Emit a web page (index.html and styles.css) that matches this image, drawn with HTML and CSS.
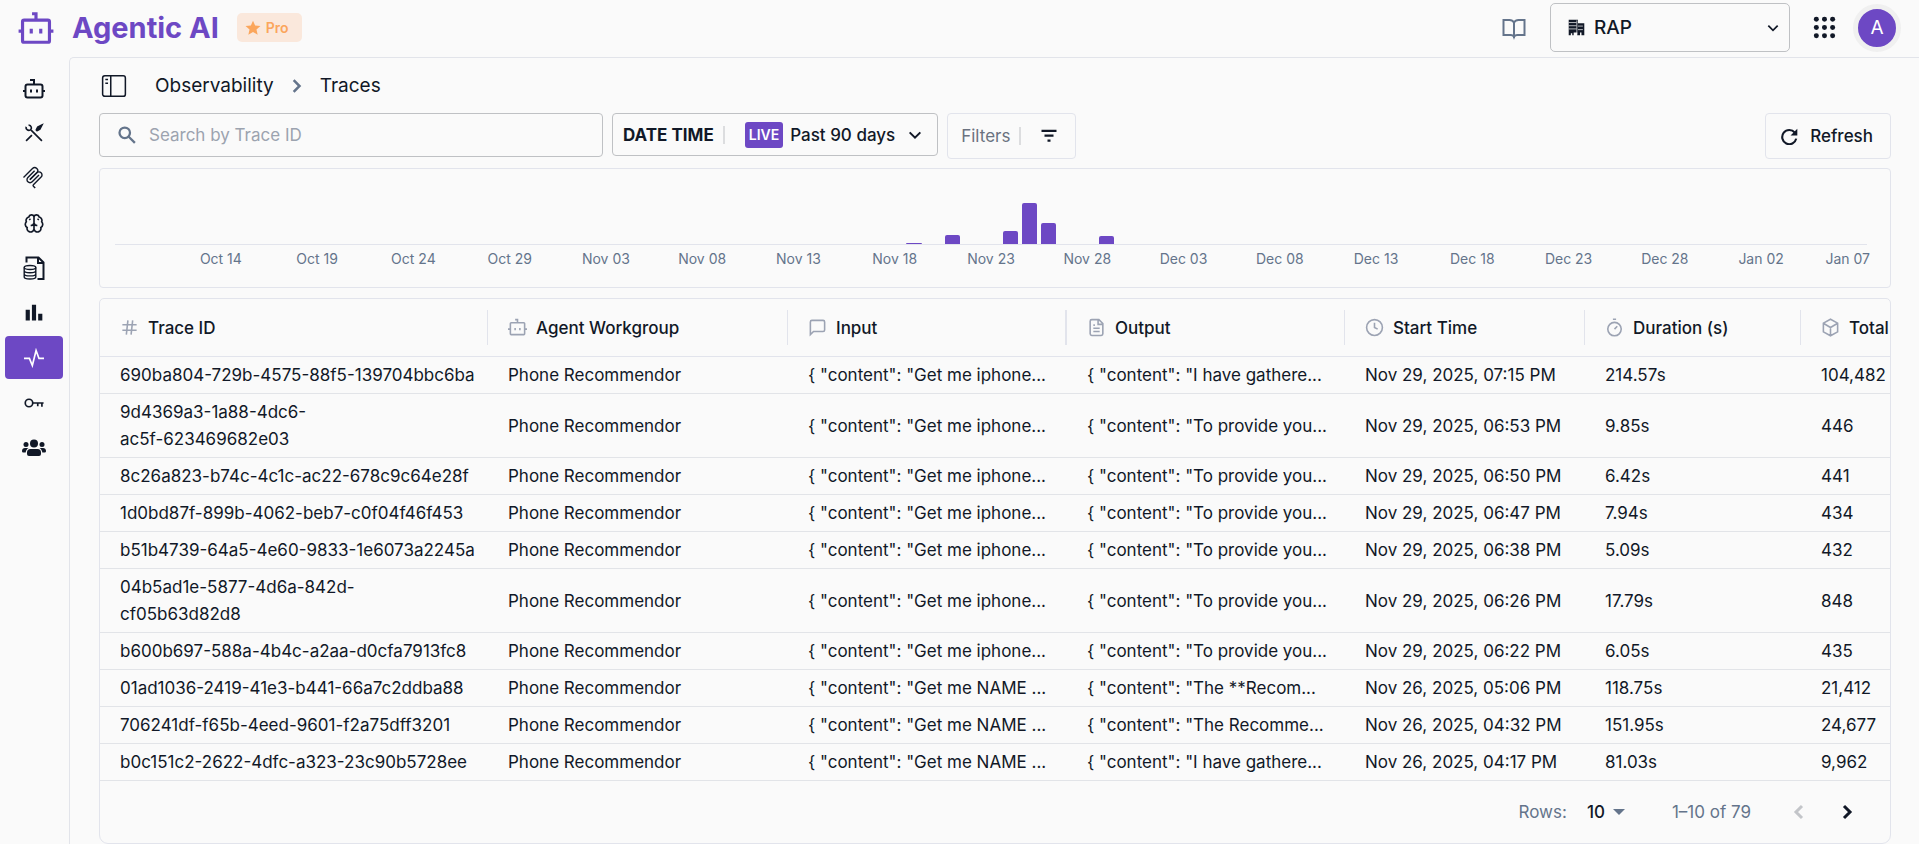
FILE: index.html
```html
<!DOCTYPE html>
<html lang="en">
<head>
    <meta charset="UTF-8">
    <meta name="viewport" content="width=device-width, initial-scale=1.0">
    <title>Agentic AI - Traces</title>
    <link rel="stylesheet" href="styles.css">
</head>
<body>
    <header class="topbar">
        <a class="brand" href="#">
            <svg class="brand-icon" viewBox="0 0 24 24"><path d="M12 7V3H9.500M1 14h3M20 14h3M9 12.500v3M15 12.500v3"/><rect x="3.500" y="7" width="17" height="14" rx="1"/></svg>
            <span class="brand-name">Agentic AI</span>
        </a>
        <span class="plan">
            <svg class="plan-icon" viewBox="0 0 24 24"><path d="M12 1l3.200 7.400 8 .7-6 5.300 1.800 7.800-7-4.200-7 4.200 1.800-7.800-6-5.300 8-.7z"/></svg>
            Pro
        </span>
        <div class="topbar-actions">
            <a class="docs-link" href="#" aria-label="Documentation">
                <svg class="line-icon" viewBox="0 0 24 24"><path d="M12 6.500C11 4.800 9.500 4 7.500 4H1.500v15h7c2 0 3 .6 3.500 2 .5-1.400 1.500-2 3.500-2h7V4h-6c-2 0-3.500.8-4.500 2.500zM12 6.500V22"/></svg>
            </a>
            <div class="workspace">
                <svg class="workspace-icon" viewBox="0 0 24 24"><path d="M1 1h13v5h9v17h-4v-4h-2v4h-4v-4H8v4H6v-3H4v3H1z"/><path class="cut" d="M1 5h11M1 9.500h11M1 14h11M14 10h7M14 15h7M12.500 2v20"/></svg>
                <select class="workspace-select" aria-label="Workspace">
                    <option>RAP</option>
                </select>
                <svg class="select-arrow" viewBox="0 0 24 24"><path d="M4 8l8 8 8-8"/></svg>
            </div>
            <button class="apps-button" type="button" aria-label="Apps">
                <svg class="apps-icon" viewBox="0 0 24 24"><circle cx="3.500" cy="3.500" r="2.600"/><circle cx="12" cy="3.500" r="2.600"/><circle cx="20.500" cy="3.500" r="2.600"/><circle cx="3.500" cy="12" r="2.600"/><circle cx="12" cy="12" r="2.600"/><circle cx="20.500" cy="12" r="2.600"/><circle cx="3.500" cy="20.500" r="2.600"/><circle cx="12" cy="20.500" r="2.600"/><circle cx="20.500" cy="20.500" r="2.600"/></svg>
            </button>
            <button class="avatar" type="button">A</button>
        </div>
    </header>

    <div class="layout">
        <nav class="sidebar" aria-label="Main">
            <a class="nav-item" href="#" aria-label="Agents">
                <svg class="nav-icon large" viewBox="0 0 24 24"><path d="M12 8V4H8M1 15h3M20 15h3M9 13.500v3M15 13.500v3"/><rect x="3.500" y="8.500" width="17" height="13" rx="2"/></svg>
            </a>
            <a class="nav-item" href="#" aria-label="Tools">
                <svg class="nav-icon" viewBox="0 0 24 24"><path d="M8.500 8.500L21.500 21.500M2.500 21.500l7-7M14.500 9.500l3-3"/><path d="M2.500 4.500c-.5 3 2 5 5 4C10 7 9 2.500 5.500 2.500"/><path class="solid" d="M21.500 2.500l-5 2.500-1.500 3 1 1 3-1.500z"/></svg>
            </a>
            <a class="nav-item" href="#" aria-label="MCP servers">
                <svg class="nav-icon large thin" viewBox="0 0 24 24"><path d="M1.500 11.500l9-9a3 3 0 0 1 4.300 4.300l-7 7"/><path d="M8 13.600l6.800-6.800a3 3 0 0 1 4.300 0 3 3 0 0 1 0 4.300l-7.700 7.700a1 1 0 0 0 0 1.400l1.800 1.900"/><path d="M12.600 4.700l-6.700 6.800a3 3 0 0 0 4.300 4.300l6.800-6.800"/></svg>
            </a>
            <a class="nav-item" href="#" aria-label="Models">
                <svg class="nav-icon" viewBox="0 0 24 24"><path d="M12 4.500a3.200 3.200 0 0 0-6.200.3 4.200 4.200 0 0 0-3 5.700 4.500 4.500 0 0 0 1 7A4.200 4.200 0 0 0 12 19.500zM12 4.500a3.200 3.200 0 0 1 6.200.3 4.200 4.200 0 0 1 3 5.700 4.500 4.500 0 0 1-1 7 4.200 4.200 0 0 1-8.200 2M8 15c2 0 3.500-.8 4-3 .5 2.200 2 3 4 3M6.500 7l1 1.500M17.500 7l-1 1.500"/></svg>
            </a>
            <a class="nav-item" href="#" aria-label="Knowledge">
                <svg class="nav-icon large" viewBox="0 0 24 24"><path d="M4.500 6.500V1.500h12l5 5v16.500h-6M16 1.500v5.500h5.500"/><g class="disk"><ellipse cx="8" cy="11.500" rx="5.800" ry="2"/><path d="M2.200 11.500v9.500c0 1.100 2.600 2 5.800 2s5.800-.9 5.800-2v-9.500M2.200 14.700c0 1.100 2.600 2 5.800 2s5.800-.9 5.800-2M2.200 17.900c0 1.100 2.600 2 5.800 2s5.800-.9 5.800-2"/></g></svg>
            </a>
            <a class="nav-item" href="#" aria-label="Analytics">
                <svg class="nav-icon fill" viewBox="0 0 24 24"><path d="M2 8h5v13H2zM9.500 2h5v19h-5zM17 13h5v8h-5z"/></svg>
            </a>
            <a class="nav-item active" href="#" aria-label="Observability">
                <svg class="nav-icon" viewBox="0 0 24 24"><path d="M0 12.500h6.500l3.500 8.500 4.500-18L18 12.500h6"/></svg>
            </a>
            <a class="nav-item" href="#" aria-label="Keys">
                <svg class="nav-icon" viewBox="0 0 24 24"><circle cx="6" cy="12" r="4.500"/><path d="M10.500 12H23.500M16.500 12v4M21.500 12v4.500"/></svg>
            </a>
            <a class="nav-item" href="#" aria-label="Users">
                <svg class="nav-icon large fill" viewBox="0 0 24 24"><circle cx="12" cy="7.500" r="4"/><circle cx="4" cy="8.500" r="2.500"/><circle cx="20" cy="8.500" r="2.500"/><path d="M8.500 13h7a3.500 3.500 0 0 1 3.500 3.500V18a2 2 0 0 1-2 2H7a2 2 0 0 1-2-2v-1.500A3.500 3.500 0 0 1 8.500 13zM3 12h3.500c-1.700 1-2.500 2.500-2.800 4.500H1.500C.7 16.500 0 16 0 15c0-1.800 1.200-3 3-3zM21 12h-3.500c1.700 1 2.500 2.500 2.800 4.500h2.200c.8 0 1.500-.5 1.500-1.500 0-1.800-1.200-3-3-3z"/></svg>
            </a>
        </nav>

        <main class="content">
            <div class="breadcrumb">
                <button class="panel-toggle" type="button" aria-label="Toggle sidebar">
                    <svg class="panel-icon" viewBox="0 0 24 24"><rect x="1.500" y="2.500" width="21" height="19" rx="2"/><path d="M9 2.500v19M4 6h2.500M4 9.500h2.500"/></svg>
                </button>
                <a class="crumb" href="#">Observability</a>
                <svg class="crumb-arrow" viewBox="0 0 24 24"><path d="M8 5l7 7-7 7"/></svg>
                <span class="crumb">Traces</span>
            </div>

            <div class="toolbar">
                <label class="search">
                    <svg class="search-icon" viewBox="0 0 24 24"><circle cx="9" cy="9" r="7"/><path d="M14 14l8.500 8.500"/></svg>
                    <input class="search-input" type="text" placeholder="Search by Trace ID" aria-label="Search by Trace ID">
                </label>
                <button class="date-button" type="button">
                    <span class="date-title">DATE TIME</span>
                    <span class="divider"></span>
                    <span class="live">LIVE</span>
                    <span class="date-range">Past 90 days</span>
                    <svg class="date-arrow" viewBox="0 0 24 24"><path d="M4 8l8 8 8-8"/></svg>
                </button>
                <button class="filter-button" type="button">
                    <span>Filters</span>
                    <span class="divider"></span>
                    <svg class="filter-icon" viewBox="0 0 24 24"><path d="M2 5h20M6 11.500h12M10 18h4"/></svg>
                </button>
                <button class="refresh-button" type="button">
                    <svg class="refresh-icon" viewBox="0 0 24 24"><path class="arc" d="M19.500 6.500A10 10 0 1 0 21.500 15"/><path d="M23 1v9.500h-9.500z"/></svg>
                    Refresh
                </button>
            </div>

            <section class="chart" aria-label="Traces per day">
                <div class="bars">
                    <div class="bar" style="grid-column: 42; height: 1px"></div>
                    <div class="bar" style="grid-column: 44; height: 9px"></div>
                    <div class="bar" style="grid-column: 47; height: 13px"></div>
                    <div class="bar" style="grid-column: 48; height: 41px"></div>
                    <div class="bar" style="grid-column: 49; height: 21px"></div>
                    <div class="bar" style="grid-column: 52; height: 8px"></div>
                </div>
                <div class="days">
                    <span>Oct 14</span>
                    <span>Oct 19</span>
                    <span>Oct 24</span>
                    <span>Oct 29</span>
                    <span>Nov 03</span>
                    <span>Nov 08</span>
                    <span>Nov 13</span>
                    <span>Nov 18</span>
                    <span>Nov 23</span>
                    <span>Nov 28</span>
                    <span>Dec 03</span>
                    <span>Dec 08</span>
                    <span>Dec 13</span>
                    <span>Dec 18</span>
                    <span>Dec 23</span>
                    <span>Dec 28</span>
                    <span>Jan 02</span>
                    <span>Jan 07</span>
                </div>
            </section>

            <section class="table-card">
                <table class="traces">
                    <colgroup>
                        <col class="col-id">
                        <col class="col-agent">
                        <col class="col-input">
                        <col class="col-output">
                        <col class="col-start">
                        <col class="col-duration">
                        <col class="col-tokens">
                    </colgroup>
                    <thead>
                        <tr>
                            <th><div class="head"><svg class="head-icon" viewBox="0 0 24 24"><path d="M3 8.500h18M3 15.500h18M10 3L8 21M16 3l-2 18"/></svg>Trace ID</div></th>
                            <th><div class="head"><svg class="head-icon" viewBox="0 0 24 24"><path d="M12 6V2H9M0 14h3M21 14h3M9 12.500v3M15 12.500v3"/><rect x="3" y="6" width="18" height="15" rx="1"/></svg>Agent Workgroup</div></th>
                            <th><div class="head wide"><svg class="head-icon" viewBox="0 0 24 24"><path d="M21 15a2 2 0 0 1-2 2H7l-4 4V5a2 2 0 0 1 2-2h14a2 2 0 0 1 2 2z"/></svg>Input</div></th>
                            <th><div class="head"><svg class="head-icon" viewBox="0 0 24 24"><path d="M15 2H6a2 2 0 0 0-2 2v16a2 2 0 0 0 2 2h12a2 2 0 0 0 2-2V7zM14 2v6h6M8 9h2M8 13h8M8 17h8"/></svg>Output</div></th>
                            <th><div class="head"><svg class="head-icon" viewBox="0 0 24 24"><circle cx="12" cy="12" r="10"/><path d="M12 6v6l4 2"/></svg>Start Time</div></th>
                            <th><div class="head"><svg class="head-icon" viewBox="0 0 24 24"><circle cx="12" cy="14" r="8.500"/><path d="M10 1.500h4M12 14l3.500-3.500"/></svg>Duration (s)</div></th>
                            <th><div class="head last"><svg class="head-icon" viewBox="0 0 24 24"><path d="M12 1.500l9 5v11l-9 5-9-5v-11zM3.500 7l8.500 5 8.500-5M12 12v10"/></svg>Total</div></th>
                        </tr>
                    </thead>
                    <tbody>
                        <tr>
                            <td>690ba804-729b-4575-88f5-139704bbc6ba</td>
                            <td>Phone Recommendor</td>
                            <td>{ "content": "Get me iphone...</td>
                            <td>{ "content": "I have gathere...</td>
                            <td>Nov 29, 2025, 07:15 PM</td>
                            <td>214.57s</td>
                            <td>104,482</td>
                        </tr>
                        <tr>
                            <td>9d4369a3-1a88-4dc6-<br>ac5f-623469682e03</td>
                            <td>Phone Recommendor</td>
                            <td>{ "content": "Get me iphone...</td>
                            <td>{ "content": "To provide you...</td>
                            <td>Nov 29, 2025, 06:53 PM</td>
                            <td>9.85s</td>
                            <td>446</td>
                        </tr>
                        <tr>
                            <td>8c26a823-b74c-4c1c-ac22-678c9c64e28f</td>
                            <td>Phone Recommendor</td>
                            <td>{ "content": "Get me iphone...</td>
                            <td>{ "content": "To provide you...</td>
                            <td>Nov 29, 2025, 06:50 PM</td>
                            <td>6.42s</td>
                            <td>441</td>
                        </tr>
                        <tr>
                            <td>1d0bd87f-899b-4062-beb7-c0f04f46f453</td>
                            <td>Phone Recommendor</td>
                            <td>{ "content": "Get me iphone...</td>
                            <td>{ "content": "To provide you...</td>
                            <td>Nov 29, 2025, 06:47 PM</td>
                            <td>7.94s</td>
                            <td>434</td>
                        </tr>
                        <tr>
                            <td>b51b4739-64a5-4e60-9833-1e6073a2245a</td>
                            <td>Phone Recommendor</td>
                            <td>{ "content": "Get me iphone...</td>
                            <td>{ "content": "To provide you...</td>
                            <td>Nov 29, 2025, 06:38 PM</td>
                            <td>5.09s</td>
                            <td>432</td>
                        </tr>
                        <tr>
                            <td>04b5ad1e-5877-4d6a-842d-<br>cf05b63d82d8</td>
                            <td>Phone Recommendor</td>
                            <td>{ "content": "Get me iphone...</td>
                            <td>{ "content": "To provide you...</td>
                            <td>Nov 29, 2025, 06:26 PM</td>
                            <td>17.79s</td>
                            <td>848</td>
                        </tr>
                        <tr>
                            <td>b600b697-588a-4b4c-a2aa-d0cfa7913fc8</td>
                            <td>Phone Recommendor</td>
                            <td>{ "content": "Get me iphone...</td>
                            <td>{ "content": "To provide you...</td>
                            <td>Nov 29, 2025, 06:22 PM</td>
                            <td>6.05s</td>
                            <td>435</td>
                        </tr>
                        <tr>
                            <td>01ad1036-2419-41e3-b441-66a7c2ddba88</td>
                            <td>Phone Recommendor</td>
                            <td>{ "content": "Get me NAME ...</td>
                            <td>{ "content": "The **Recom...</td>
                            <td>Nov 26, 2025, 05:06 PM</td>
                            <td>118.75s</td>
                            <td>21,412</td>
                        </tr>
                        <tr>
                            <td>706241df-f65b-4eed-9601-f2a75dff3201</td>
                            <td>Phone Recommendor</td>
                            <td>{ "content": "Get me NAME ...</td>
                            <td>{ "content": "The Recomme...</td>
                            <td>Nov 26, 2025, 04:32 PM</td>
                            <td>151.95s</td>
                            <td>24,677</td>
                        </tr>
                        <tr>
                            <td>b0c151c2-2622-4dfc-a323-23c90b5728ee</td>
                            <td>Phone Recommendor</td>
                            <td>{ "content": "Get me NAME ...</td>
                            <td>{ "content": "I have gathere...</td>
                            <td>Nov 26, 2025, 04:17 PM</td>
                            <td>81.03s</td>
                            <td>9,962</td>
                        </tr>
                    </tbody>
                </table>
                <div class="pagination">
                    <label for="rows">Rows:</label>
                    <div class="rows">
                        <select class="rows-select" id="rows">
                            <option>10</option>
                        </select>
                        <svg class="rows-arrow" viewBox="0 0 12 6"><path d="M0 0h12L6 6z"/></svg>
                    </div>
                    <span class="range">1–10 of 79</span>
                    <button class="page-button" type="button" aria-label="Previous page" disabled>
                        <svg class="page-icon" viewBox="0 0 24 24"><path d="M15 6l-6 6 6 6"/></svg>
                    </button>
                    <button class="page-button" type="button" aria-label="Next page">
                        <svg class="page-icon" viewBox="0 0 24 24"><path d="M9 6l6 6-6 6"/></svg>
                    </button>
                </div>
            </section>
        </main>
    </div>
</body>
</html>
```
FILE: styles.css
```css
* {
    box-sizing: border-box;
}
body {
    margin: 0;
    background-color: #fafafa;
    color: #111827;
    font-family: Inter, "Liberation Sans", sans-serif;
    font-size: 17px;
    min-height: 100vh;
    display: flex;
    flex-direction: column;
}
a {
    color: inherit;
    text-decoration: none;
}
button, input, select {
    font: inherit;
    color: inherit;
    background: none;
    border: none;
    padding: 0;
    margin: 0;
    outline: none;
}
button {
    cursor: pointer;
}
select {
    appearance: none;
}
svg {
    display: block;
    flex-shrink: 0;
    fill: none;
    stroke: currentColor;
    stroke-width: 2;
}

/* Top bar */
.topbar {
    display: flex;
    align-items: center;
    height: 57px;
    padding: 0 18px 2px 17px;
}
.brand {
    display: flex;
    align-items: center;
    gap: 17px;
    color: #6d48c4;
}
.brand-icon {
    width: 38px;
    height: 38px;
}
.brand-name {
    font-size: 29px;
    font-weight: 700;
}
.plan {
    display: flex;
    align-items: center;
    gap: 5px;
    height: 29px;
    margin-left: 18px;
    padding: 0 13px 0 8px;
    border-radius: 5px;
    background-color: #fae8dc;
    color: #fba65c;
    font-size: 14px;
    font-weight: 600;
}
.plan-icon {
    width: 16px;
    height: 16px;
    fill: currentColor;
    stroke: none;
}
.topbar-actions {
    display: flex;
    align-items: center;
    margin-left: auto;
}
.docs-link {
    margin-right: 24px;
    color: #64748b;
}
.line-icon {
    width: 24px;
    height: 24px;
}
.workspace {
    display: flex;
    align-items: center;
    width: 240px;
    height: 49px;
    padding: 0 9px 0 17px;
    border: 1px solid #bfc1c4;
    border-radius: 5px;
}
.workspace-icon {
    width: 17px;
    height: 17px;
    margin-right: 9px;
    fill: currentColor;
    stroke: none;
}
.workspace-icon .cut {
    stroke: #fafafa;
    stroke-width: 1;
}
.workspace-select {
    flex: 1;
    height: 100%;
    font-size: 19px;
    font-weight: 500;
}
.select-arrow {
    width: 14px;
    height: 14px;
    stroke-width: 3;
}
.apps-button {
    margin-left: 23px;
}
.apps-icon {
    width: 23px;
    height: 23px;
    fill: currentColor;
    stroke: none;
}
.avatar {
    width: 48px;
    height: 48px;
    margin-left: 17px;
    border: 5px solid #f0f0f0;
    border-radius: 50%;
    background-color: #6d48c4;
    color: #fff;
    font-size: 19px;
}

/* Sidebar */
.layout {
    display: flex;
    flex: 1;
}
.sidebar {
    display: flex;
    flex-direction: column;
    gap: 2px;
    width: 69px;
    padding: 9px 6px 0 5px;
    flex-shrink: 0;
}
.nav-item {
    display: flex;
    align-items: center;
    justify-content: center;
    height: 43px;
    border-radius: 4px;
}
.nav-item.active {
    background-color: #6d48c4;
    color: #fff;
}
.nav-icon {
    width: 20px;
    height: 20px;
}
.nav-icon.large {
    width: 24px;
    height: 24px;
}
.nav-icon.thin {
    stroke-width: 1.4;
}
.nav-icon.fill {
    fill: currentColor;
    stroke: none;
}
.nav-icon .solid {
    fill: currentColor;
}
.nav-icon .disk {
    stroke-width: 1.4;
}

/* Content */
.content {
    flex: 1;
    min-width: 0;
    padding: 0 28px 0 29px;
    border-top: 1px solid #e2e4ea;
    border-left: 1px solid #e2e4ea;
    border-top-left-radius: 5px;
}
.breadcrumb {
    display: flex;
    align-items: center;
    height: 55px;
    padding-left: 2px;
    font-size: 19px;
}
.panel-icon {
    width: 26px;
    height: 26px;
    stroke-width: 1.4;
}
.panel-toggle {
    margin-right: 28px;
}
.crumb-arrow {
    width: 20px;
    height: 20px;
    margin: 0 13px;
    color: #64748b;
    stroke-width: 3;
}

/* Search and filters */
.toolbar {
    display: flex;
    align-items: flex-start;
    gap: 9px;
    height: 55px;
}
.search {
    display: flex;
    align-items: center;
    gap: 13px;
    width: 504px;
    height: 44px;
    padding: 0 18px;
    border: 1px solid #bfc1c4;
    border-radius: 4px;
}
.search-icon {
    width: 18px;
    height: 18px;
    color: #64748b;
    stroke-width: 3;
}
.search-input {
    flex: 1;
    min-width: 0;
    height: 100%;
}
.search-input::placeholder {
    color: #9ca3af;
    opacity: 1;
}
.divider {
    width: 2px;
    height: 18px;
    background-color: #dcdddf;
}
.date-button {
    display: flex;
    align-items: center;
    height: 43px;
    padding: 0 14px 0 10px;
    border: 1px solid #bfc1c4;
    border-radius: 4px;
    font-weight: 500;
}
.date-title {
    margin-right: 9px;
    font-weight: 700;
}
.live {
    height: 26px;
    margin: 0 7px 0 20px;
    padding: 0 4px;
    border-radius: 3px;
    background-color: #6d48c4;
    color: #fff;
    font-size: 14px;
    font-weight: 600;
    line-height: 26px;
}
.date-arrow {
    width: 16px;
    height: 16px;
    margin-left: 12px;
    stroke-width: 3;
}
.filter-button {
    display: flex;
    align-items: center;
    gap: 9px;
    height: 46px;
    padding: 0 17px 0 13px;
    border: 1px solid #e2e4ec;
    border-radius: 4px;
    color: #6b7280;
}
.filter-icon {
    width: 18px;
    height: 18px;
    margin-left: 10px;
    color: #111827;
    stroke-width: 3;
}
.refresh-button {
    display: flex;
    align-items: center;
    gap: 12px;
    height: 46px;
    margin-left: auto;
    padding: 0 17px 0 15px;
    border: 1px solid #e2e4ec;
    border-radius: 4px;
    font-weight: 500;
}
.refresh-icon {
    width: 17px;
    height: 17px;
    fill: currentColor;
    stroke: none;
}
.refresh-icon .arc {
    fill: none;
    stroke: currentColor;
    stroke-width: 3;
}

/* Chart */
.chart {
    height: 120px;
    padding: 0 23px 0 15px;
    border: 1px solid #e2e4ec;
    border-radius: 4px;
}
.bars {
    display: grid;
    grid-template-columns: repeat(91, minmax(0, 1fr));
    align-items: end;
    height: 76px;
    border-bottom: 1px solid #e2e4ec;
}
.bar {
    grid-row: 1;
    margin: 0 2px;
    border-radius: 2px 2px 0 0;
    background-color: #6d48c4;
}
.days {
    display: grid;
    grid-template-columns: repeat(91, minmax(0, 1fr));
    padding-top: 4px;
    color: #64748b;
    font-size: 14px;
    line-height: 20px;
}
.days span {
    grid-column: span 5;
    text-align: center;
    white-space: nowrap;
}
.days span:first-child {
    grid-column: 4 / span 5;
}
.days span:last-child {
    grid-column: 90 / span 2;
    justify-self: center;
}

/* Traces table */
.table-card {
    margin-top: 10px;
    border: 1px solid #e2e4ec;
    border-radius: 5px 5px 9px 9px;
}
.traces {
    width: 100%;
    table-layout: fixed;
    border-collapse: separate;
    border-spacing: 0;
}
.col-id {
    width: 388px;
}
.col-agent {
    width: 300px;
}
.col-input {
    width: 279px;
}
.col-output {
    width: 278px;
}
.col-start {
    width: 240px;
}
.col-duration {
    width: 216px;
}
.traces th {
    height: 58px;
    padding: 0;
    border-bottom: 1px solid #e2e4ec;
    font-weight: 500;
    text-align: left;
}
.head {
    display: flex;
    align-items: center;
    gap: 9px;
    height: 35px;
    padding-left: 20px;
    border-right: 1px solid #e2e4ec;
    white-space: nowrap;
}
.head.wide {
    border-right-width: 2px;
}
.head.last {
    border-right: none;
}
.head-icon {
    width: 19px;
    height: 19px;
    color: #9ca3b3;
}
.traces td {
    padding: 5px 0 4px 20px;
    border-bottom: 1px solid #e2e4e8;
    line-height: 27px;
    white-space: nowrap;
}
.pagination {
    display: flex;
    align-items: center;
    justify-content: flex-end;
    height: 62px;
    padding-right: 31px;
    color: #64748b;
}
.rows {
    display: flex;
    align-items: center;
    margin-left: 20px;
    color: #111827;
}
.rows-select {
    width: 26px;
    font-weight: 500;
}
.rows-arrow {
    width: 12px;
    height: 6px;
    fill: #64748b;
    stroke: none;
}
.range {
    margin: 0 36px 0 47px;
}
.page-button {
    color: #111827;
}
.page-button + .page-button {
    margin-left: 24px;
}
.page-button:disabled {
    color: #c3c5c9;
}
.page-icon {
    width: 24px;
    height: 24px;
    stroke-width: 3;
}
```
